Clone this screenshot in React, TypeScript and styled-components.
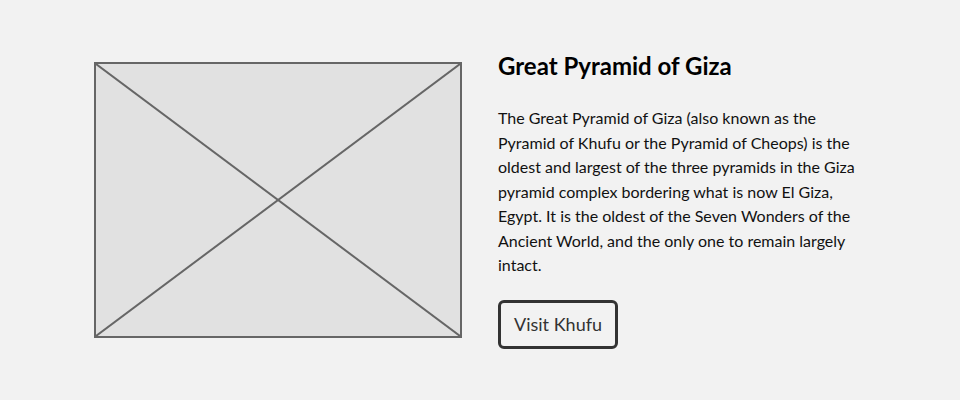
import React from "react";
import styled, { createGlobalStyle } from "styled-components";

const Global = createGlobalStyle`
  html, body { margin: 0; padding: 0; background: #f2f2f2; }
  body { font-family: Lato, "Open Sans", sans-serif; color: #111; }
`;

const Page = styled.main`
  height: 400px;
  display: flex;
  align-items: center;
  justify-content: center;
`;

const Row = styled.section`
  display: grid;
  grid-template-columns: 368px 368px;
  column-gap: 36px;
  align-items: center;
`;

const Placeholder = styled.div`
  width: 368px;
  height: 276px;
  box-sizing: border-box;
  border: 2px solid #666;
  background: #e1e1e1;
  svg { display: block; width: 100%; height: 100%; }
`;

const Text = styled.div`
  display: flex;
  flex-direction: column;
  align-items: flex-start;
`;

const Title = styled.h2`
  margin: 0;
  font-size: 24px;
  font-weight: 700;
  line-height: 29px;
  color: #000;
`;

const Body = styled.p`
  margin: 26px 0 22px;
  font-size: 16px;
  line-height: 24.5px;
  color: #111;
  width: 362px;
`;

const Button = styled.button`
  font-family: Lato, sans-serif;
  font-size: 18px;
  color: #333;
  background: transparent;
  border: 3px solid #333;
  border-radius: 6px;
  padding: 0 13px;
  height: 49px;
  cursor: pointer;
`;

export default function App() {
  return (
    <>
      <Global />
      <Page>
        <Row>
          <Placeholder>
            <svg viewBox="0 0 364 272" preserveAspectRatio="none">
              <line x1="0" y1="0" x2="364" y2="272" stroke="#666" strokeWidth="2" />
              <line x1="364" y1="0" x2="0" y2="272" stroke="#666" strokeWidth="2" />
            </svg>
          </Placeholder>
          <Text>
            <Title>Great Pyramid of Giza</Title>
            <Body>
              The Great Pyramid of Giza (also known as the Pyramid of Khufu or the Pyramid of
              Cheops) is the oldest and largest of the three pyramids in the Giza pyramid complex
              bordering what is now El Giza, Egypt. It is the oldest of the Seven Wonders of the
              Ancient World, and the only one to remain largely intact.
            </Body>
            <Button>Visit Khufu</Button>
          </Text>
        </Row>
      </Page>
    </>
  );
}
